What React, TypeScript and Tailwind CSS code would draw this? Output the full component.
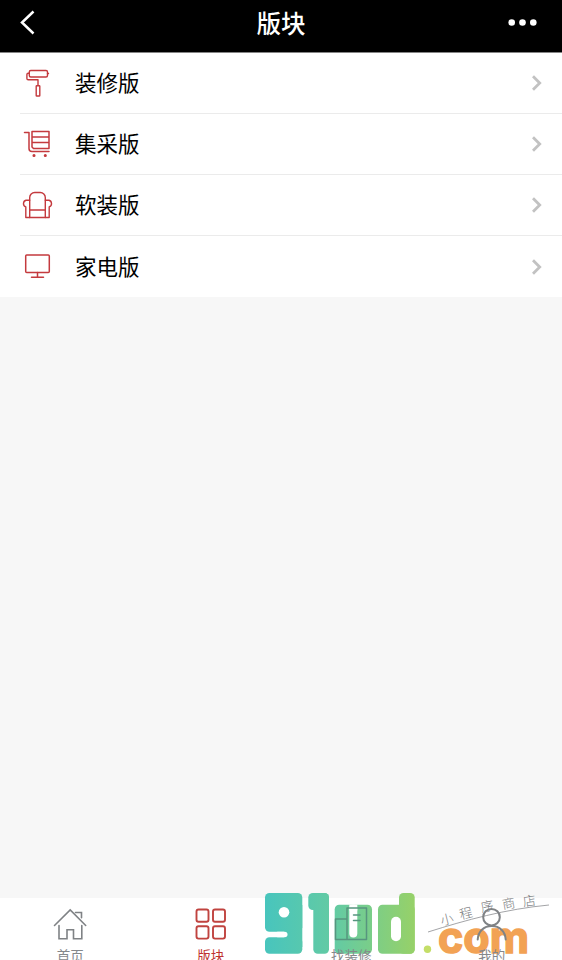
import React from 'react';

const line = {
  fill: 'none',
  strokeLinecap: 'round' as const,
  strokeLinejoin: 'round' as const,
};

function RollerIcon() {
  return (
    <svg width="34" height="34" viewBox="0 0 34 34" stroke="#c43a3e" strokeWidth="1.4" {...line}>
      <rect x="9.300" y="4.500" width="18.200" height="6.500" rx="1.500" />
      <path d="M27.500 7.500h1M9.300 7.200H8.200A1.300 1.300 0 0 0 6.900 8.500v4a1.300 1.300 0 0 0 1.300 1.300H18v5.500" />
      <rect x="16.200" y="19.700" width="3.600" height="10.300" rx="0.600" />
    </svg>
  );
}

function CartIcon() {
  return (
    <svg width="34" height="34" viewBox="0 0 34 34" stroke="#c43a3e" strokeWidth="1.500" {...line}>
      <path d="M4.500 5.500H9v16a3 3 0 0 0 3 3h17" />
      <path d="M12 4.500h17v17H13.500L12 20V4.500M12 10h17M12 15.500h17" />
      <circle cx="14" cy="28.500" r="0.800" fill="#c43a3e" />
      <circle cx="25.300" cy="28.500" r="0.800" fill="#c43a3e" />
    </svg>
  );
}

function SofaIcon() {
  return (
    <svg width="34" height="34" viewBox="0 0 34 34" stroke="#c43a3e" strokeWidth="1.400" {...line}>
      <path d="M9.700 29.500V9.500a5 5 0 0 1 5-5h5.600a5 5 0 0 1 5 5v20M9.700 22h15.600" />
      <path d="M9.700 12.300H6a3.400 3.400 0 0 0-.200 6.500v10.700h23.400V18.800a3.400 3.400 0 0 0-.200-6.500h-3.700" />
    </svg>
  );
}

function ScreenIcon() {
  return (
    <svg width="34" height="34" viewBox="0 0 34 34" stroke="#c43a3e" strokeWidth="1.500" {...line}>
      <rect x="5.700" y="5" width="23.600" height="17.500" rx="1" />
      <path d="M17.500 22.500v4.400M11.500 27.200h12" />
    </svg>
  );
}

function HomeIcon() {
  return (
    <svg width="36" height="36" viewBox="0 0 36 36" stroke="#7f8285" strokeWidth="1.600" {...line} strokeLinejoin="miter">
      <path d="M2.500 19.500 18.200 4l15.500 15.500M23.500 6.500h6v5.300M7 19.500v13.200h8v-9h6.500v9h8.300V19.500" />
    </svg>
  );
}

function GridIcon() {
  return (
    <svg width="36" height="36" viewBox="0 0 36 36" stroke="#c0433f" strokeWidth="1.900" {...line}>
      <rect x="3.500" y="3.500" width="12" height="12.300" rx="2" />
      <rect x="20" y="3.500" width="12" height="12.300" rx="2" />
      <rect x="3.500" y="20.300" width="12" height="12.300" rx="2" />
      <rect x="20" y="20.300" width="12" height="12.300" rx="2" />
    </svg>
  );
}

function BuildingIcon() {
  return (
    <svg width="36" height="36" viewBox="0 0 36 36" stroke="#57957f" strokeWidth="1.500" {...line}>
      <path d="M14 33.500V2h19.500v31.500H2.500V13H14M20.500 9h6.500M20.500 14.500h6.500" />
    </svg>
  );
}

function PersonIcon() {
  return (
    <svg width="36" height="36" viewBox="0 0 36 36" stroke="#7f8285" strokeWidth="2" {...line}>
      <circle cx="17.500" cy="11.200" r="8.300" />
      <path d="M3.700 33.500c.500-8 6-13.500 14-13.500s13.500 5.500 14 13.500" />
    </svg>
  );
}

function Watermark() {
  return (
    <svg className="pointer-events-none absolute bottom-0 right-0" width="302" height="74" viewBox="260 886 302 74">
      <defs>
        <linearGradient id="brand" gradientUnits="userSpaceOnUse" x1="265" y1="0" x2="415" y2="0">
          <stop offset="0" stopColor="#48c5bd" />
          <stop offset="0.500" stopColor="#66cba0" />
          <stop offset="1" stopColor="#97d168" />
        </linearGradient>
      </defs>
      {/* Block logo mark */}
      <g fill="url(#brand)">
        <rect x="265" y="893" width="37.300" height="38.700" rx="4.500" />
        <rect x="265" y="937.300" width="37.300" height="16.500" rx="4.500" />
        <rect x="284" y="905" width="18.300" height="42" />
        <rect x="308.300" y="893" width="20.700" height="17" rx="4.500" />
        <rect x="313.300" y="893" width="15.700" height="60.800" rx="4.500" />
        <rect x="334.700" y="904.700" width="37.300" height="49.100" rx="4.500" />
        <rect x="378" y="904.700" width="36.700" height="49.100" rx="4.500" />
        <rect x="399" y="893" width="15.700" height="60.800" rx="4.500" />
      </g>
      <g fill="white">
        <circle cx="284" cy="912.300" r="5.300" />
        <rect x="275" y="931.700" width="12.500" height="5.600" rx="2.800" />
        <rect x="349.300" y="904.500" width="8" height="33" rx="4" />
        <rect x="349.300" y="904.500" width="8" height="6" />
        <rect x="391" y="916.700" width="10" height="24.500" rx="5" />
      </g>
      <circle cx="427.500" cy="949.300" r="3.700" fill="#c4de68" />
      <text x="438" y="952.500" textLength="91" lengthAdjust="spacingAndGlyphs" fontFamily="Inter, sans-serif" fontWeight="700" fontSize="44" fill="#f2a254" stroke="#f2a254" strokeWidth="1.500">com</text>
      <path d="M428 932c38-12 78-23 121-27" fill="none" stroke="#8b8d90" strokeWidth="0.800" />
      <g fill="#77797c" fontFamily="'Noto Sans CJK SC', sans-serif" fontSize="13" fontWeight="300" textAnchor="middle">
        <text transform="translate(448 924) rotate(-14)">小</text>
        <text transform="translate(467 918) rotate(-14)">程</text>
        <text transform="translate(488 911) rotate(-12)">序</text>
        <text transform="translate(509.500 908) rotate(-10)">商</text>
        <text transform="translate(530 905.500) rotate(-8)">店</text>
      </g>
    </svg>
  );
}

const boards = [
  { name: '装修版', Icon: RollerIcon },
  { name: '集采版', Icon: CartIcon },
  { name: '软装版', Icon: SofaIcon },
  { name: '家电版', Icon: ScreenIcon },
];

const tabs = [
  { name: '首页', Icon: HomeIcon, tone: 'text-[#85888b]' },
  { name: '版块', Icon: GridIcon, tone: 'text-[#c0332f]' },
  { name: '找装修', Icon: BuildingIcon, tone: 'text-[#85888b]' },
  { name: '我的', Icon: PersonIcon, tone: 'text-[#85888b]' },
];

export default function App() {
  return (
    <div className="flex h-[960px] w-[562px] flex-col overflow-hidden bg-[#f7f7f7] font-['Noto_Sans_CJK_SC',sans-serif]">
      <header className="grid h-[53px] shrink-0 grid-cols-[1fr_auto_1fr] items-center border-b border-[#858585] bg-black pb-[6px] pl-[18px] pr-[18px] text-white">
        <svg width="32" height="30" viewBox="0 0 32 30" fill="none" stroke="white" strokeWidth="2.500">
          <path d="M15.500 3.500 4 14.500l11.500 11" />
        </svg>
        <h1 className="text-[24.500px] font-medium leading-none">版块</h1>
        <svg className="mr-[5px] justify-self-end" width="32" height="10" viewBox="0 0 32 10" fill="white">
          <circle cx="4.700" cy="4.500" r="3.300" />
          <circle cx="15.500" cy="4.500" r="3.300" />
          <circle cx="26.300" cy="4.500" r="3.300" />
        </svg>
      </header>
      <main className="flex-1">
        <ul className="bg-white pl-5">
          {boards.map(({ name, Icon }, i) => (
            <li key={name} className={`flex h-[61px] items-center pr-[18px] ${i < 3 ? 'border-b-[1.500px] border-[#ebebeb]' : ''}`}>
              <Icon />
              <span className="mb-[2px] ml-[21px] flex-1 text-[21.500px] leading-none text-black">{name}</span>
              <svg width="14" height="18" viewBox="0 0 14 18" fill="none" stroke="#c2c2c2" strokeWidth="2.800">
                <path d="m3 2.300 6.700 6.700L3 15.700" />
              </svg>
            </li>
          ))}
        </ul>
      </main>
      <footer className="relative h-[62px] shrink-0 bg-white">
        <Watermark />
        <nav className="relative grid grid-cols-4">
          {tabs.map(({ name, Icon, tone }) => (
            <div key={name} className={`flex flex-col items-center pt-2 ${tone}`}>
              <Icon />
              <span className="mt-[5px] text-[13.500px] leading-4">{name}</span>
            </div>
          ))}
        </nav>
      </footer>
    </div>
  );
}
